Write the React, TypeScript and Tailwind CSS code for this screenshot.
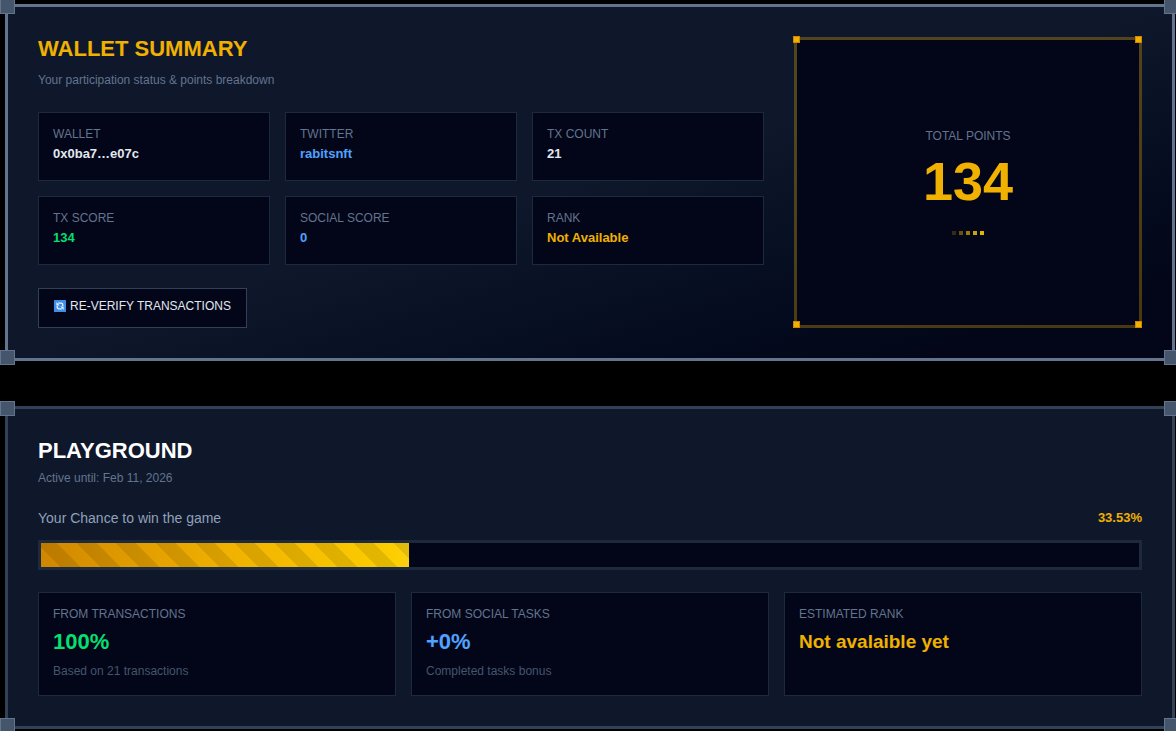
import React from 'react'

type Tone = 'light' | 'blue' | 'green' | 'gold'

const TONES: Record<Tone, string> = {
  light: 'text-slate-200',
  blue: 'text-blue-400',
  green: 'text-green-400',
  gold: 'text-yellow-500',
}

interface Stat {
  label: string
  value: string
  tone: Tone
}

const WALLET_STATS: Stat[] = [
  { label: 'WALLET', value: '0x0ba7…e07c', tone: 'light' },
  { label: 'TWITTER', value: 'rabitsnft', tone: 'blue' },
  { label: 'TX COUNT', value: '21', tone: 'light' },
  { label: 'TX SCORE', value: '134', tone: 'green' },
  { label: 'SOCIAL SCORE', value: '0', tone: 'blue' },
  { label: 'RANK', value: 'Not Available', tone: 'gold' },
]

const CHANCE = 33.53

const DOTS = ['opacity-20', 'opacity-40', 'opacity-60', 'opacity-80', 'opacity-90']

function PanelCorners() {
  const base = 'absolute size-[15px] border border-slate-500 bg-slate-600'
  return (
    <>
      <span className={`${base} -top-2 -left-2`} />
      <span className={`${base} -top-2 -right-[7px]`} />
      <span className={`${base} -bottom-[7px] -left-2`} />
      <span className={`${base} -right-[7px] -bottom-[7px]`} />
    </>
  )
}

function PointsCorners() {
  const base = 'absolute size-[7px] border border-yellow-600 bg-yellow-500'
  return (
    <>
      <span className={`${base} -top-1 -left-1`} />
      <span className={`${base} -top-1 -right-[3px]`} />
      <span className={`${base} -bottom-[3px] -left-1`} />
      <span className={`${base} -right-[3px] -bottom-[3px]`} />
    </>
  )
}

function RefreshIcon() {
  return (
    <svg viewBox="0 0 12 12" className="size-3" aria-hidden="true">
      <rect width="12" height="12" rx="0.5" fill="#3f8fe8" />
      <g fill="none" stroke="#e6f2ff" strokeWidth="1.3">
        <path d="M4.2 3.2H7A1.8 1.8 0 0 1 8.8 5V6" />
        <path d="M7.8 8.8H5A1.8 1.8 0 0 1 3.2 7V6" />
      </g>
      <path d="M2.4 2v3.4h3.2zM9.6 10V6.6H6.4z" fill="#e6f2ff" />
    </svg>
  )
}

function StatCard({ label, value, tone }: Stat) {
  return (
    <div className="border border-slate-800 bg-slate-950 p-3.5">
      <dt className="text-xs leading-[15px] text-slate-500">{label}</dt>
      <dd className={`text-[13px] leading-6 font-bold ${TONES[tone]}`}>{value}</dd>
    </div>
  )
}

function ResultCard({ label, value, tone, hint }: Stat & { hint?: string }) {
  return (
    <div className="border border-slate-800 bg-slate-950 px-3.5 pt-3.5 pb-4">
      <h3 className="text-xs leading-[15px] text-slate-500">{label}</h3>
      <p
        className={`mt-1 leading-8 font-bold ${hint ? 'text-[22px]' : 'text-[19px]'} ${TONES[tone]}`}
      >
        {value}
      </p>
      {hint && <p className="mt-1.5 text-xs leading-[15px] text-slate-600">{hint}</p>}
    </div>
  )
}

function WalletSummary() {
  return (
    <section className="relative grid grid-cols-3 gap-[30px] border-3 border-slate-500 bg-linear-to-br from-slate-900 via-slate-900 to-slate-950 to-90% p-[30px]">
      <PanelCorners />
      <div className="col-span-2">
        <h2 className="text-[22px] leading-[23px] font-bold text-yellow-500">WALLET SUMMARY</h2>
        <p className="mt-2.5 text-xs leading-5 text-slate-500">
          Your participation status &amp; points breakdown
        </p>
        <dl className="mt-[22px] grid grid-cols-3 gap-[15px]">
          {WALLET_STATS.map((stat) => (
            <StatCard key={stat.label} {...stat} />
          ))}
        </dl>
        <button
          type="button"
          className="mt-[23px] flex h-10 items-center gap-1 border border-slate-700 bg-slate-950 px-[15px] pb-1 text-xs text-slate-200 hover:border-slate-500"
        >
          <RefreshIcon />
          RE-VERIFY TRANSACTIONS
        </button>
      </div>

      {/* Total points */}
      <div className="relative flex flex-col items-center justify-center border-3 border-yellow-500/30 bg-slate-950 bg-clip-padding pb-0.5">
        <PointsCorners />
        <p className="text-xs leading-[15px] text-slate-500">TOTAL POINTS</p>
        <p className="mt-2.5 text-[54px] leading-[54px] font-bold text-yellow-500">134</p>
        <div className="mt-[23px] flex gap-[3px]">
          {DOTS.map((opacity) => (
            <span key={opacity} className={`size-1 bg-yellow-400 ${opacity}`} />
          ))}
        </div>
      </div>
    </section>
  )
}

function Playground() {
  return (
    <section className="relative border-3 border-slate-700 bg-slate-900 p-[30px]">
      <PanelCorners />
      <h2 className="text-[22px] leading-[23px] font-bold text-white">PLAYGROUND</h2>
      <p className="mt-1.5 text-xs leading-5 text-slate-500">Active until: Feb 11, 2026</p>

      <div className="mt-5 flex items-center justify-between leading-5">
        <span id="chance-label" className="text-sm text-slate-400">
          Your Chance to win the game
        </span>
        <span className="text-[13px] font-bold text-yellow-500">{CHANCE}%</span>
      </div>
      <div
        role="progressbar"
        aria-labelledby="chance-label"
        aria-valuenow={CHANCE}
        aria-valuemin={0}
        aria-valuemax={100}
        className="mt-3 h-[30px] border-3 border-slate-800 bg-slate-950"
      >
        <div
          className="h-full bg-linear-to-r from-yellow-600 via-yellow-500 to-[#fdd010]"
          style={{ width: `${CHANCE}%` }}
        >
          {/* Diagonal stripes */}
          <div className="h-full bg-[repeating-linear-gradient(45deg,transparent,transparent_14px,rgba(0,0,0,0.1)_14px,rgba(0,0,0,0.1)_28px)]" />
        </div>
      </div>

      <div className="mt-[22px] grid grid-cols-3 gap-[15px]">
        <ResultCard
          label="FROM TRANSACTIONS"
          value="100%"
          tone="green"
          hint="Based on 21 transactions"
        />
        <ResultCard
          label="FROM SOCIAL TASKS"
          value="+0%"
          tone="blue"
          hint="Completed tasks bonus"
        />
        <ResultCard label="ESTIMATED RANK" value="Not avalaible yet" tone="gold" />
      </div>
    </section>
  )
}

export default function App() {
  return (
    <main className="flex min-h-screen flex-col gap-[45px] overflow-hidden bg-black pt-1 pr-px pl-[5px] font-['Liberation_Sans',Arial,sans-serif]">
      <WalletSummary />
      <Playground />
    </main>
  )
}
